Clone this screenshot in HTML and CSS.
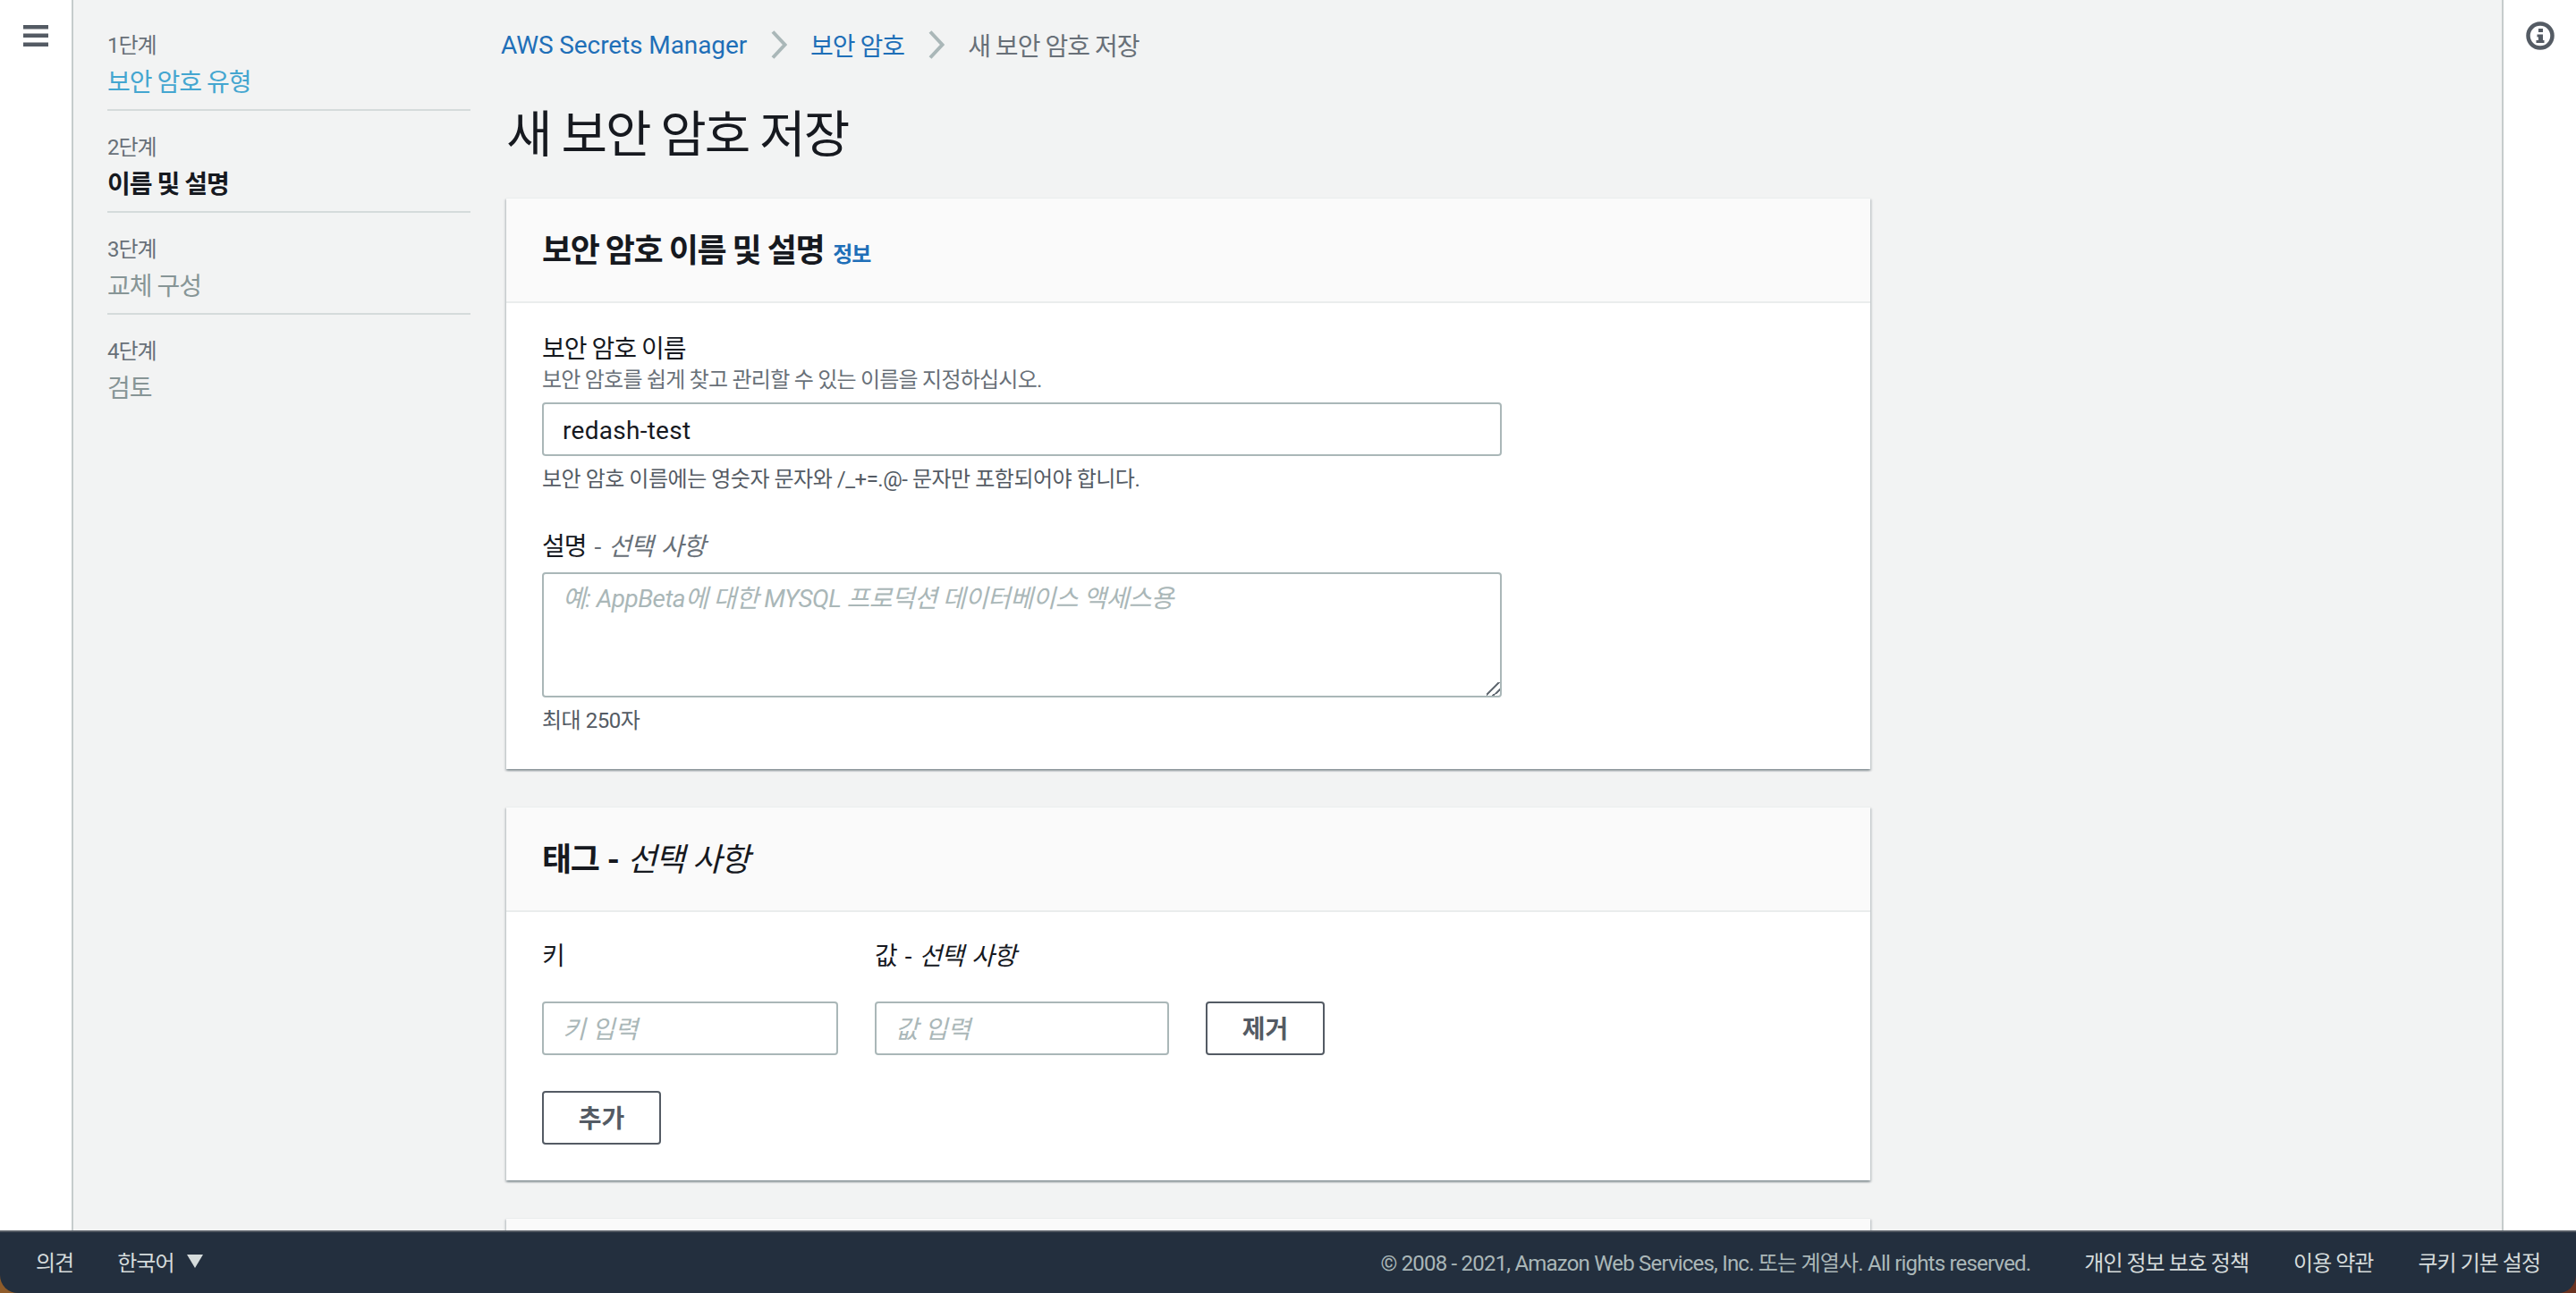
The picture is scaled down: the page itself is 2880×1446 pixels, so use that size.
FILE: index.html
```html
<!DOCTYPE html>
<html lang="ko">
<head>
<meta charset="utf-8">
<title>새 보안 암호 저장</title>
<link rel="stylesheet" href="styles.css">
</head>
<body>
<div class="app">
  <div class="shell">
    <aside class="rail rail-left">
      <svg class="menu-icon" viewBox="0 0 28 24" width="28" height="24" aria-label="메뉴">
        <rect x="0" y="0" width="28" height="4.5"/>
        <rect x="0" y="9.5" width="28" height="4.5"/>
        <rect x="0" y="19.5" width="28" height="4.5"/>
      </svg>
    </aside>
    <div class="content">
      <nav class="steps">
        <div class="step">
          <div class="step-num">1단계</div>
          <a class="step-name step-link">보안 암호 유형</a>
        </div>
        <div class="step">
          <div class="step-num">2단계</div>
          <div class="step-name step-current">이름 및 설명</div>
        </div>
        <div class="step">
          <div class="step-num">3단계</div>
          <div class="step-name step-todo">교체 구성</div>
        </div>
        <div class="step step-last">
          <div class="step-num">4단계</div>
          <div class="step-name step-todo">검토</div>
        </div>
      </nav>
      <main class="main">
        <div class="crumbs">
          <a class="link latin">AWS Secrets Manager</a>
          <svg class="chev" viewBox="0 0 18 32" width="18" height="32"><path d="M2 1.5 L15.5 16 L2 30.5"/></svg>
          <a class="link">보안 암호</a>
          <svg class="chev" viewBox="0 0 18 32" width="18" height="32"><path d="M2 1.5 L15.5 16 L2 30.5"/></svg>
          <span class="crumb-here">새 보안 암호 저장</span>
        </div>
        <h1 class="title">새 보안 암호 저장</h1>

        <section class="card">
          <header class="card-head">
            <h2 class="card-title">보안 암호 이름 및 설명</h2>
            <a class="info-link">정보</a>
          </header>
          <div class="card-body">
            <label class="label label-first">보안 암호 이름</label>
            <div class="desc">보안 암호를 쉽게 찾고 관리할 수 있는 이름을 지정하십시오.</div>
            <input class="field field-wide value" type="text" value="redash-test">
            <div class="hint">보안 암호 이름에는 영숫자 문자와 /_+=.@- 문자만 포함되어야 합니다.</div>
            <label class="label label-gap">설명 <span class="optional">- <i>선택 사항</i></span></label>
            <textarea class="field field-wide area" placeholder="예: AppBeta에 대한 MYSQL 프로덕션 데이터베이스 액세스용"></textarea>
            <div class="hint">최대 250자</div>
          </div>
        </section>

        <section class="card card-second">
          <header class="card-head">
            <h2 class="card-title tag-title">태그 - <i class="light">선택 사항</i></h2>
          </header>
          <div class="card-body tag-body">
            <div class="tag-labels">
              <label class="label tag-col-key">키</label>
              <label class="label tag-col-val wide-words">값 - <i>선택 사항</i></label>
            </div>
            <div class="tag-row">
              <input class="field tag-input tag-col-key" type="text" placeholder="키 입력">
              <input class="field tag-input tag-col-val" type="text" placeholder="값 입력">
              <button class="btn" type="button">제거</button>
            </div>
            <button class="btn btn-add" type="button">추가</button>
          </div>
        </section>

        <section class="card card-third"></section>
      </main>
    </div>
    <aside class="rail rail-right">
      <svg class="info-icon" viewBox="0 0 32 32" width="32" height="32" aria-label="정보">
        <circle cx="16" cy="16" r="13.5"/>
        <rect class="solid" x="14" y="8" width="5" height="4"/>
        <path class="solid" d="M12.5 14.5 H19 V21 H20.5 V24 H11.5 V21 H14 V17.5 H12.5 Z"/>
      </svg>
    </aside>
  </div>
  <footer class="footer">
    <div class="foot-left">
      <a class="foot-link">의견</a>
      <a class="foot-link foot-lang">한국어<span class="tri"></span></a>
    </div>
    <div class="foot-right">
      <span class="copy">© 2008 - 2021, Amazon Web Services, Inc. 또는 계열사. All rights reserved.</span>
      <a class="foot-link">개인 정보 보호 정책</a>
      <a class="foot-link">이용 약관</a>
      <a class="foot-link">쿠키 기본 설정</a>
    </div>
  </footer>
</div>
</body>
</html>
```
FILE: styles.css
```css
* { box-sizing: border-box; }
html, body { margin: 0; height: 100%; overflow: hidden; }
body {
  background: linear-gradient(90deg, #8f5c2a 0%, #6a3220 100%);
  color: #16191f;
  font-family: "Roboto", "Noto Sans CJK KR", sans-serif;
  font-size: 28px;
  letter-spacing: -0.035em;
}
.latin { letter-spacing: -0.1px; }
.app { display: flex; flex-direction: column; height: 100vh; }
.shell { display: flex; flex: 1; min-height: 0; background: #fff; }
.rail { background: #fff; flex: none; }
.rail-left { width: 80px; padding: 28px 0 0 26px; }
.rail-right { width: 81px; padding: 24px 0 0 25px; }
.menu-icon { display: block; fill: #545b64; }
.info-icon { display: block; fill: none; stroke: #545b64; stroke-width: 4.5; }
.info-icon .solid { fill: #545b64; stroke: none; }

.content {
  flex: 1; min-width: 0; display: flex;
  background: #f2f3f3;
  border-left: 2px solid #c6cccc;
  border-right: 2px solid #c6cccc;
  overflow: hidden;
}
.steps { width: 484px; flex: none; padding: 10px 0 0 38px; }
.step { width: 406px; padding: 25px 0 7px; border-bottom: 2px solid #d5dbdb; }
.step-last { border-bottom: 0; }
.step-num { font-size: 24px; line-height: 32px; color: #687078; margin-bottom: 4px; }
.step-name { display: block; line-height: 44px; }
.step-link { color: #44a6d0; }
.step-current { font-weight: 700; }
.step-todo { color: #879596; }

.main { width: 1525px; flex: none; }
.crumbs { display: flex; align-items: center; height: 44px; margin-top: 28px; margin-left: -6px; }
.link { color: #1f6fb8; }
.chev { margin: 0 26px 0 27px; fill: none; stroke: #aab7b8; stroke-width: 4; flex: none; }
.crumb-here { color: #687078; }
.title { margin: 43px 0 34px; font-size: 56px; line-height: 72px; font-weight: 400; letter-spacing: -2px; }

.card {
  background: #fff;
  border-top: 1px solid #eaeded;
  box-shadow: 0 2px 2px 0 rgba(0,28,36,.3), 2px 2px 2px 0 rgba(0,28,36,.1), -2px 2px 2px 0 rgba(0,28,36,.1);
}
.card-second { margin-top: 42px; }
.card-third { margin-top: 42px; height: 60px; background: #fafafa; }
.card-head {
  display: flex; align-items: baseline; gap: 10px;
  height: 117px; padding: 0 40px;
  background: #fafafa;
  border-bottom: 2px solid #eaeded;
  line-height: 119px;
}
.card-title { margin: 0; font-size: 36px; font-weight: 700; letter-spacing: -0.04em; }
.tag-title { word-spacing: 2px; }
.light { font-weight: 400; }
.info-link { font-size: 24px; font-weight: 700; color: #1f6fb8; }
.card-body { padding: 29px 40px 38px; }
.label { display: block; line-height: 40px; }
.label-first { padding-top: 3px; margin-bottom: -1px; height: 42px; }
.label-gap { margin-top: 40px; word-spacing: 3px; }
.wide-words { word-spacing: 3px; }
.optional { color: #687078; }
.desc { font-size: 24px; line-height: 32px; color: #687078; letter-spacing: -0.032em; height: 31px; }
.hint { font-size: 24px; line-height: 32px; color: #545b64; margin-top: 10px; letter-spacing: -0.02em; }
.field {
  display: block;
  height: 60px;
  padding: 0 21px;
  font: inherit;
  letter-spacing: -0.02em;
  color: #16191f;
  background: #fff;
  border: 2px solid #aab7b8;
  border-radius: 4px;
  outline: 0;
}
.value { padding-top: 2px; letter-spacing: 0.01em; }
.tag-input { padding-top: 2px; letter-spacing: 0; }
.field::placeholder { color: #aab7b8; font-style: italic; opacity: 1; }
.field-wide { width: 1073px; margin-top: 10px; }
.area { height: 140px; margin-top: 8px; padding: 12px 21px 8px; line-height: 32px; }
.area::-webkit-resizer {
  background: linear-gradient(135deg, transparent 0 42%, #687078 42% 52%, transparent 52% 70%, #687078 70% 80%, transparent 80%);
}

.tag-body { padding-top: 30px; padding-bottom: 40px; }
.tag-labels { display: flex; gap: 41px; }
.tag-row { display: flex; gap: 41px; margin-top: 30px; }
.tag-col-key { width: 331px; flex: none; }
.tag-col-val { width: 329px; flex: none; }
.btn {
  display: block;
  width: 133px; height: 60px; padding: 0 0 3px;
  font: inherit; font-weight: 700;
  color: #545b64; background: #fff;
  border: 2px solid #545b64; border-radius: 4px;
}
.btn-add { margin-top: 40px; }

.footer {
  flex: none; height: 70px;
  display: flex; justify-content: space-between; align-items: center;
  padding: 0 40px 3px;
  background: #232f3e;
  border-top: 2px solid #545b64;
  border-radius: 0 0 20px 20px;
  font-size: 24px;
  color: #d5dbdb;
}
.foot-left, .foot-right { display: flex; align-items: center; }
.foot-lang { display: flex; align-items: center; margin-left: 49px; }
.tri { width: 0; height: 0; margin-left: 14px; border-left: 9px solid transparent; border-right: 9px solid transparent; border-top: 15px solid #d5dbdb; }
.copy { color: #aab7b8; letter-spacing: -0.8px; }
.foot-right .foot-link { margin-left: 50px; }
.foot-right .copy + .foot-link { margin-left: 60px; }
```
